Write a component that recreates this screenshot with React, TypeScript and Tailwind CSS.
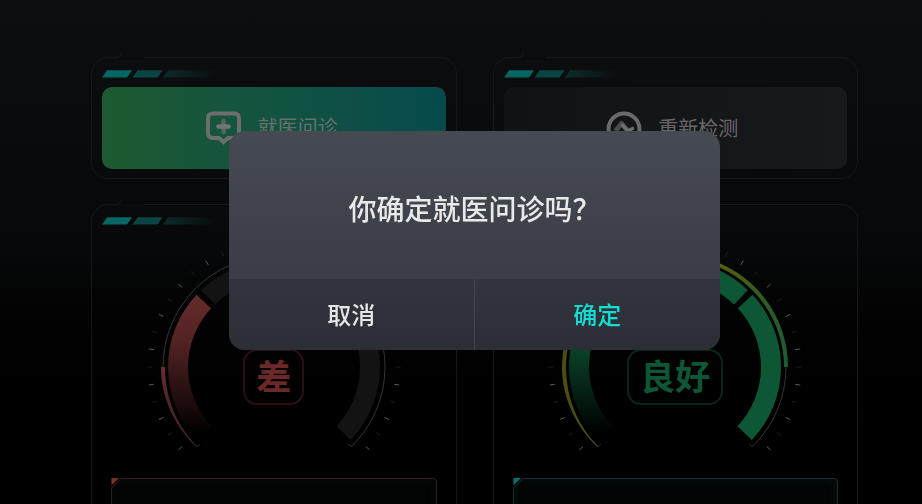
import { useState, type ReactNode } from 'react';

const FONT = "font-['Liberation_Sans','Noto_Sans_CJK_SC',sans-serif]";

// ゲージの寸法（中心を原点とする）
const RING_R = 111;
const BAND_OUTER = 106;
const BAND_INNER = 86;

// 角度は右向きを0°、上向きを正とする
const point = (r: number, deg: number) => {
  const rad = (deg * Math.PI) / 180;
  return `${(r * Math.cos(rad)).toFixed(2)} ${(-r * Math.sin(rad)).toFixed(2)}`;
};

// from から to まで時計回りに描く帯
const bandPath = (from: number, to: number) =>
  `M${point(BAND_OUTER, from)} A${BAND_OUTER} ${BAND_OUTER} 0 0 1 ${point(BAND_OUTER, to)} ` +
  `L${point(BAND_INNER, to)} A${BAND_INNER} ${BAND_INNER} 0 0 0 ${point(BAND_INNER, from)} Z`;

// 始点で細く、終点で太くなる外周リング
const taperPath = (from: number, to: number) => {
  const steps = 60;
  const outer: string[] = [];
  const inner: string[] = [];
  for (let i = 0; i <= steps; i++) {
    const deg = from + ((to - from) * i) / steps;
    const width = Math.min(2, 0.4 + (from - deg) / 24);
    outer.push(point(RING_R + width, deg));
    inner.unshift(point(RING_R - width, deg));
  }
  return `M${[...outer, ...inner].join(' L')} Z`;
};

const SEGMENTS = [
  [223.5, 137],
  [133.4, 91.8],
  [88.2, 46.6],
  [43, -43.5],
];

const TICKS = Array.from({ length: 33 }, (_, i) => ({
  deg: 90 + ((i - 16) * 90) / 11,
  bright: i % 2 === 0,
}));

type Level = 'bad' | 'good';

const LEVELS = {
  bad: {
    label: '差',
    color: '#662a2b',
    ring: ['#3a2224', '#542729', '#6b2b2c'],
    ringTo: 180,
    ringAxis: { x1: -80, y1: 80, x2: -111, y2: 0 },
    filled: 1,
    badge: 'border-[#2a1012] text-[#6b2829]',
    panel: 'border-[#2c2022] shadow-[inset_0_0_8px_#1d0f1066]',
    line: '#3a2a2c',
    corner: '#7a3030',
  },
  good: {
    label: '良好',
    color: '#0d5735',
    ring: ['#4a4c14', '#5a5c12', '#1f5c2e'],
    ringTo: 0,
    ringAxis: { x1: -111, y1: 0, x2: 111, y2: 0 },
    filled: 4,
    badge: 'border-[#08261b] text-[#0d5636]',
    panel: 'border-[#15302f] shadow-[inset_0_0_10px_#0c282866]',
    line: '#1b3635',
    corner: '#077170',
  },
};

function Gauge({ level }: { level: Level }) {
  const { label, color, ring, ringTo, ringAxis, filled, badge } = LEVELS[level];

  return (
    <div className="grid place-items-center">
      <svg viewBox="-130 -130 260 230" className="col-start-1 row-start-1 h-[230px] w-[260px]">
        <defs>
          <linearGradient id={`fade-${level}`} gradientUnits="userSpaceOnUse" x1="0" y1="-72" x2="0" y2="66">
            <stop offset="0" stopColor={color} />
            <stop offset="0.35" stopColor={color} stopOpacity="0.8" />
            <stop offset="1" stopColor={color} stopOpacity="0" />
          </linearGradient>
          <linearGradient id={`ring-${level}`} gradientUnits="userSpaceOnUse" {...ringAxis}>
            <stop offset="0" stopColor={ring[0]} />
            <stop offset="0.68" stopColor={ring[1]} />
            <stop offset="1" stopColor={ring[2]} />
          </linearGradient>
        </defs>

        {/* 目盛り */}
        {TICKS.map(({ deg, bright }) => (
          <path
            key={deg}
            d={`M${point(121.5, deg)} L${point(126.5, deg)}`}
            stroke={bright ? '#5a5a5a' : '#1d1d1d'}
            strokeWidth="1"
          />
        ))}

        {/* 外周の細線 */}
        <path
          d={`M${point(107, 226)} L${point(RING_R, 226)} A${RING_R} ${RING_R} 0 1 1 ${point(RING_R, -46)} L${point(107, -46)}`}
          fill="none"
          stroke="#343435"
        />
        <path d={taperPath(226, ringTo)} fill={`url(#ring-${level})`} />

        {SEGMENTS.map(([from, to], i) => (
          <path
            key={from}
            d={bandPath(from, to)}
            fill={i === 0 ? `url(#fade-${level})` : i < filled ? color : '#131313'}
          />
        ))}
      </svg>
      <strong
        className={`col-start-1 row-start-1 mt-[50px] rounded-[14px] border-2 px-[11px] pt-[2px] text-[35px] leading-[50px] font-bold ${badge}`}
      >
        {label}
      </strong>
    </div>
  );
}

function Slashes() {
  return (
    <svg viewBox="0 0 116 8" className="h-2 w-[116px]">
      <defs>
        <linearGradient id="slash-fade">
          <stop offset="0" stopColor="#0c2b2b" />
          <stop offset="1" stopColor="#0c2b2b" stopOpacity="0" />
        </linearGradient>
      </defs>
      <path d="M5 0.3H30L25 7.5H0Z" fill="#076664" />
      <path d="M35.5 0.3H60.5L55.5 7.5H30.5Z" fill="#0a4543" />
      <path d="M66 0.3H116L111 7.5H61Z" fill="url(#slash-fade)" />
    </svg>
  );
}

function Card({ className = '', children }: { className?: string; children: ReactNode }) {
  return (
    <section className={`relative rounded-[17px] border border-[#16171a] px-[10px] pt-3 ${className}`}>
      {/* 上辺の切り欠き */}
      <svg viewBox="0 0 28 8" className="absolute -top-[5px] left-6 h-2 w-7">
        <path d="M2 4H28V7H2Z" fill="#0a0b0d" />
        <path d="M0 4.5H2L6 0.5" fill="none" stroke="#1b1c1f" />
      </svg>
      {children}
    </section>
  );
}

function ConsultIcon() {
  return (
    <svg viewBox="0 0 38 36" className="h-9 w-[38px]">
      <path
        d="M9 3.5H30Q35 3.5 35 8.5V23Q35 28 30 28H24L19.5 32L15 28H9Q4 28 4 23V8.5Q4 3.5 9 3.5Z"
        fill="none"
        stroke="#6c6e6d"
        strokeWidth="4"
      />
      <path d="M19.5 11V22" stroke="#56665f" strokeWidth="4.5" strokeLinecap="round" />
      <path d="M14.5 16.5H24.5" stroke="#747675" strokeWidth="4.5" strokeLinecap="round" />
    </svg>
  );
}

function RetestIcon() {
  return (
    <svg viewBox="0 0 36 36" className="size-9">
      <circle cx="18" cy="18" r="15.5" fill="none" stroke="#6a6a6b" strokeWidth="4" />
      <path d="M9.5 20L15.5 12.5L21 19" fill="none" stroke="#4a4a4b" strokeWidth="5" strokeLinejoin="round" />
      <path d="M16.5 14L22 20L26.5 17.5" fill="none" stroke="#6c6c6d" strokeWidth="3.5" strokeLinecap="round" />
    </svg>
  );
}

function ResultCard({ level }: { level: Level }) {
  const { panel, line, corner } = LEVELS[level];

  return (
    <Card className="h-[340px] pb-5">
      <Slashes />
      <div className="mt-3">
        <Gauge level={level} />
      </div>
      <div className={`relative mx-[9px] mt-[11px] h-[120px] rounded border bg-[#030505] ${panel}`}>
        <svg viewBox="0 0 11 11" className="absolute -top-px -left-px size-[11px]">
          <path d="M0 0H11L0 11Z" fill="#000" />
          <path d="M0.5 0H8L0.5 7.5Z" fill={corner} />
          <path d="M0 10.5L10.5 0" stroke={line} />
        </svg>
      </div>
    </Card>
  );
}

export default function App() {
  const [open, setOpen] = useState(true);

  return (
    <div
      className={`h-screen overflow-hidden bg-linear-to-b from-[#0d0e10] via-[#070809] via-50% to-black to-90% pr-16 pl-[91px] ${FONT}`}
    >
      <main className="grid grid-cols-2 gap-x-9 gap-y-[25px] pt-[57px]">
        <Card className="pb-[9px]">
          <Slashes />
          <button
            type="button"
            onClick={() => setOpen(true)}
            className="mt-[9px] flex h-[82px] w-full items-center justify-center gap-4 rounded-[10px] bg-linear-to-r from-[#1d5a31] to-[#074a4d] pr-1.5 text-xl text-[#68706e]"
          >
            <ConsultIcon />
            就医问诊
          </button>
        </Card>
        <Card className="pb-[9px]">
          <Slashes />
          <button
            type="button"
            className="mt-[9px] flex h-[82px] w-full items-center justify-center gap-4 rounded-[10px] bg-linear-to-r from-[#111214] to-[#18191c] pt-0.5 pr-1.5 text-xl text-[#68686a]"
          >
            <RetestIcon />
            重新检测
          </button>
        </Card>
        <ResultCard level="bad" />
        <ResultCard level="good" />
      </main>

      {/* 確認ダイアログ */}
      {open && (
        <div className="fixed inset-0 flex items-start justify-center pt-[131px] pr-16 pl-[91px]">
          <div
            role="dialog"
            aria-modal="true"
            aria-labelledby="dialog-title"
            className="w-[64%] overflow-hidden rounded-2xl bg-linear-to-b from-[#464a51] to-[#343740] font-medium"
          >
            <h2 id="dialog-title" className="pt-[60px] pb-12 text-center text-[28px] leading-10 text-[#e9e9ea]">
              你确定就医问诊吗？
            </h2>
            <div className="grid grid-cols-2 bg-linear-to-b from-[#32353d] to-[#2c2e35] text-2xl">
              <button
                type="button"
                onClick={() => setOpen(false)}
                className="h-[71px] border-r border-[#42454c] pt-0.5 text-[#e6e6e8]"
              >
                取消
              </button>
              <button type="button" onClick={() => setOpen(false)} className="h-[71px] pt-0.5 text-[#13dcd3]">
                确定
              </button>
            </div>
          </div>
        </div>
      )}
    </div>
  );
}
